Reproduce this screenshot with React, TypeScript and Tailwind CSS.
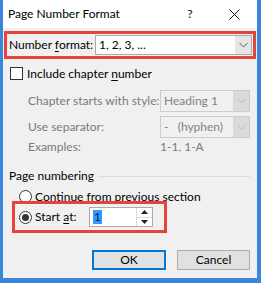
import React from 'react'

function Chevron({ color = '#5a5a5a' }: { color?: string }) {
  return (
    <svg width="9" height="6" viewBox="0 0 9 6">
      <path d="M0.5 1 L4.5 5 L8.5 1" fill="none" stroke={color} strokeWidth="1" />
    </svg>
  )
}

function Combo({ value, disabled, className }: { value: string; disabled?: boolean; className: string }) {
  return (
    <div
      className={
        'flex items-stretch border ' +
        (disabled ? 'border-[#cccccc] bg-[#f0f0f0] text-[#838383] ' : 'border-[#acacac] bg-white ') +
        className
      }
    >
      <div className="flex-1 flex items-center pl-[3px] whitespace-pre">{value}</div>
      <div
        className={
          'w-[16px] flex items-center justify-center ' + (disabled ? 'bg-[#dadada]' : 'bg-[#e5e5e5]')
        }
      >
        <Chevron color={disabled ? '#bcbcbc' : '#606060'} />
      </div>
    </div>
  )
}

function Radio({ checked }: { checked?: boolean }) {
  return (
    <div className="w-[13px] h-[13px] rounded-full border border-[#333333] bg-white flex items-center justify-center">
      {checked && <div className="w-[7px] h-[7px] rounded-full bg-[#333333]" />}
    </div>
  )
}

export default function App() {
  return (
    <div className="w-[261px] h-[283px] bg-[#3b86da] pl-[3px] pr-[4px] pb-[5px] font-['Lato','Liberation_Sans',sans-serif] text-[12px] text-black leading-none">
      <div className="flex flex-col h-full">
        <div className="h-[28px] bg-white flex items-center pl-[5px] shrink-0">
          <span className="flex-1">Page Number Format</span>
          <span className="w-[14px] text-center mr-[32px]">?</span>
          <svg width="11" height="11" viewBox="0 0 11 11" className="mr-[17px]">
            <path d="M0.5 0.5 L10.5 10.5 M10.5 0.5 L0.5 10.5" stroke="#111" strokeWidth="1" />
          </svg>
        </div>

        <div className="flex-1 bg-[#f0f0f0] flex flex-col">
          <div className="mt-[3px] mx-[1px] h-[28px] border-[3px] border-[#e5443c] flex items-center pl-[2px]">
            <span>
              Number <span className="underline underline-offset-2">f</span>ormat:
            </span>
            <Combo value="1, 2, 3, ..." className="ml-auto mr-[1px] w-[157px] h-[20px]" />
          </div>

          <div className="mt-[8px] h-[13px] flex items-center pl-[7px]">
            <div className="w-[13px] h-[13px] border border-[#333333] bg-white" />
            <span className="ml-[4px]">
              Include chapter <span className="underline underline-offset-2">n</span>umber
            </span>
          </div>

          <div className="mt-[10px] h-[22px] flex items-center pl-[25px] pr-[7px] text-[#7a7a7a]">
            <span>Chapter starts with style:</span>
            <Combo value="Heading 1" disabled className="ml-auto w-[90px] h-[22px]" />
          </div>

          <div className="mt-[4px] h-[22px] flex items-center pl-[25px] pr-[7px] text-[#7a7a7a]">
            <span>Use separator:</span>
            <Combo value="-   (hyphen)" disabled className="ml-auto w-[90px] h-[22px]" />
          </div>

          <div className="mt-[2px] h-[14px] flex items-center pl-[25px] text-[#7a7a7a]">
            <span className="w-[132px]">Examples:</span>
            <span>1-1, 1-A</span>
          </div>

          <div className="mt-[15px] h-[14px] flex items-center pl-[6px] pr-[7px]">
            <span>Page numbering</span>
            <div className="flex-1 h-px bg-[#dcdcdc] ml-[4px]" />
          </div>

          <div className="mt-[7px] h-[13px] flex items-center pl-[16px]">
            <Radio />
            <span className="ml-[3px]">Continue from previous section</span>
          </div>

          <div className="mt-[-2px] ml-[9px] w-[155px] h-[32px] border-[3px] border-[#e5443c] flex items-center pl-[4px]">
            <Radio checked />
            <span className="ml-[3px] w-[54px]">
              Start <span className="underline underline-offset-2">a</span>t:
            </span>
            <div className="w-[64px] h-[20px] border border-[#acacac] bg-white flex items-stretch">
              <div className="flex-1 flex items-center pl-[3px]">
                <span className="bg-[#3399ff] text-[#10205a] px-[1px] py-[1px]">1</span>
              </div>
              <div className="w-[16px] flex flex-col border-l border-[#dcdcdc]">
                <div className="flex-1 flex items-center justify-center border-b border-[#dcdcdc]">
                  <svg width="7" height="4" viewBox="0 0 7 4">
                    <path d="M0 4 L3.5 0 L7 4 Z" fill="#222" />
                  </svg>
                </div>
                <div className="flex-1 flex items-center justify-center">
                  <svg width="7" height="4" viewBox="0 0 7 4">
                    <path d="M0 0 L3.5 4 L7 0 Z" fill="#222" />
                  </svg>
                </div>
              </div>
            </div>
          </div>

          <div className="mt-[17px] flex justify-end gap-[11px] pr-[7px]">
            <button className="w-[74px] h-[20px] border-2 border-[#0078d7] bg-[#e1e1e1] flex items-center justify-center">
              OK
            </button>
            <button className="w-[73px] h-[20px] border border-[#adadad] bg-[#e1e1e1] flex items-center justify-center">
              Cancel
            </button>
          </div>
        </div>
      </div>
    </div>
  )
}
